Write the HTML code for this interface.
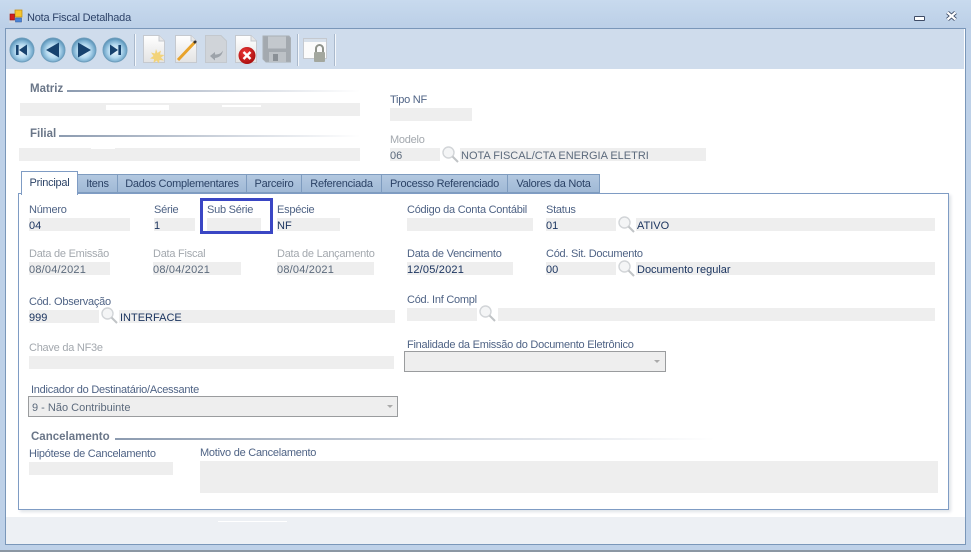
<!DOCTYPE html>
<html><head><meta charset="utf-8"><style>
html,body{margin:0;padding:0}
#w{position:relative;width:971px;height:552px;overflow:hidden;background:#bed1e8;font-family:"Liberation Sans",sans-serif;font-size:11px;letter-spacing:-.25px;color:#4a5f80}
#w *{box-sizing:border-box}
.a{position:absolute}
.f{position:absolute;background:#eee;height:13px}
.l{position:absolute;white-space:nowrap;line-height:14px;color:#4f6385;transform:translateY(1px)}
.g{color:#a3a8ae}
.v{position:absolute;white-space:nowrap;line-height:14px;color:#1c3560;letter-spacing:0;transform:translateY(1px)}
.d{letter-spacing:.2px}
.vg{color:#5c6a7c}
.b{position:absolute;white-space:nowrap;line-height:14px;font-weight:bold;font-size:11.5px;letter-spacing:0;color:#6a7688;transform:translateY(1px)}
.ln{position:absolute;height:2px;background:linear-gradient(90deg,#8c9bb0,#d5dae2 60%,#fff)}
.t{position:absolute;top:174px;height:19px;background:linear-gradient(#b3c8e0,#a0b9d6);border:1px solid #7f9cbf;border-left:0;text-align:center;line-height:19px;color:#2b4266;white-space:nowrap}
.c{position:absolute;background:#eee;border:1px solid #9a9c9e}
.ar{position:absolute;width:0;height:0;border-left:3px solid transparent;border-right:3px solid transparent;border-top:3px solid #aaa}
svg{position:absolute;overflow:visible}
</style></head><body><div id="w">
<div class="a" style="left:0;top:0;width:971px;height:28px;background:linear-gradient(#c8daee,#bbcfe7)"></div>
<div class="a" style="left:0;top:550px;width:971px;height:2px;background:#8b97a3"></div>

<svg style="left:9px;top:9px" width="14" height="14"><rect x="0" y="0" width="14" height="14" fill="#cdd6e2"/><rect x="6" y="1" width="7" height="7" fill="#f7c52c" stroke="#b78a10" stroke-width=".7"/><rect x="1" y="5" width="4.500" height="6" fill="#d21f1f" stroke="#8b1212" stroke-width=".6"/><rect x="6.500" y="9" width="6" height="4" fill="#4c85d6" stroke="#2d5da5" stroke-width=".6"/></svg>
<div class="a" style="left:27px;top:11px;line-height:14px;font-size:11px;letter-spacing:-.2px;color:#2c4268">Nota Fiscal Detalhada</div>
<div class="a" style="left:914px;top:16px;width:11px;height:5px;background:#fff;border:1px solid #3f4c66;border-radius:1px"></div>
<svg style="left:946px;top:11px" width="11" height="10"><path d="M1.500 1.500L9.500 8.500M9.500 1.500L1.500 8.500" stroke="#3f4c66" stroke-width="4"/><path d="M1.500 1.500L9.500 8.500M9.500 1.500L1.500 8.500" stroke="#fff" stroke-width="2.200"/></svg>

<div class="a" style="left:5px;top:28px;width:961px;height:517px;border:1px solid #7a97b9;background:#fff"></div>
<div class="a" style="left:6px;top:29px;width:959px;height:40px;background:#cfdcec"></div>
<div class="a" style="left:6px;top:517px;width:959px;height:27px;background:#edf0f4"></div>
<div class="a" style="left:218px;top:521px;width:69px;height:1px;background:#fff"></div>
<div class="a" style="left:964px;top:29px;width:1px;height:40px;background:#fff"></div>

<svg style="left:0;top:0" width="0" height="0"><defs>
<radialGradient id="ball" cx=".5" cy=".55" r=".55"><stop offset="0" stop-color="#f0f8fd"/><stop offset=".5" stop-color="#b5daf0"/><stop offset=".85" stop-color="#6fa6c9"/><stop offset="1" stop-color="#4f86aa"/></radialGradient>
<linearGradient id="pg" x1="0" y1="0" x2="0" y2="1"><stop offset="0" stop-color="#fff"/><stop offset="1" stop-color="#e3e3e3"/></linearGradient>
<radialGradient id="rd" cx=".4" cy=".35" r=".7"><stop offset="0" stop-color="#f03a3a"/><stop offset="1" stop-color="#a50c0c"/></radialGradient>
</defs></svg>

<svg style="left:9px;top:37px" width="26" height="26"><circle cx="13" cy="13" r="12" fill="url(#ball)" stroke="#6d9dbc"/><path d="M7 8h2.600v10H7zM10 13l8-5.500v11z" fill="#17436f"/></svg>
<svg style="left:40px;top:37px" width="26" height="26"><circle cx="13" cy="13" r="12" fill="url(#ball)" stroke="#6d9dbc"/><path d="M6 13l13-7.500v15z" fill="#17436f"/></svg>
<svg style="left:71px;top:37px" width="26" height="26"><circle cx="13" cy="13" r="12" fill="url(#ball)" stroke="#6d9dbc"/><path d="M20 13L7 5.500v15z" fill="#17436f"/></svg>
<svg style="left:102px;top:37px" width="26" height="26"><circle cx="13" cy="13" r="12" fill="url(#ball)" stroke="#6d9dbc"/><path d="M19 8h-2.600v10H19zM16 13L8 7.500v11z" fill="#17436f"/></svg>
<div class="a" style="left:134px;top:34px;width:2px;height:32px;background:#f4f7fb;border-left:1px solid #aab9cc"></div>

<svg style="left:143px;top:35px" width="22" height="28"><path d="M.5.500H16L21.500 6V27.500H.5z" fill="url(#pg)" stroke="#c5c9cf"/><path d="M16 .5V6h5.500" fill="#e7e7e7" stroke="#c5c9cf"/><path d="M13 14l1.500 4 3.500-2.500-1 4 4.500.5-3.500 2.500 3 3-4.500-.5-.5 3.500-2.500-3-3 2.500.5-4-4-.5 3.500-2.500-2.500-3.500 4 1z" fill="#f2d37a"/></svg>
<svg style="left:175px;top:35px" width="22" height="28"><path d="M.5.500H16L21.500 6V27.500H.5z" fill="url(#pg)" stroke="#c5c9cf"/><path d="M16 .5V6h5.500" fill="#e7e7e7" stroke="#c5c9cf"/><path d="M3 25L20 7" stroke="#e8a32b" stroke-width="3"/><path d="M19 8l2-2" stroke="#333" stroke-width="2.500"/></svg>
<svg style="left:205px;top:35px" width="22" height="28"><path d="M.5.500H16L21.500 6V27.500H.5z" fill="#d0d4d9" stroke="#c3c8ce"/><path d="M5 21l5-4v2.500c4 0 6-1 8-4-1 5-4 7-8 7.500v2.500z" fill="#9da3aa"/></svg>
<svg style="left:235px;top:35px" width="22" height="28"><path d="M.5.500H16L21.500 6V27.500H.5z" fill="url(#pg)" stroke="#c5c9cf"/><path d="M16 .5V6h5.500" fill="#e7e7e7" stroke="#c5c9cf"/></svg>
<svg style="left:238px;top:47px" width="20" height="18"><circle cx="9" cy="8.500" r="8.500" fill="url(#rd)"/><path d="M5.500 5l7 7M12.500 5l-7 7" stroke="#fff" stroke-width="2.400"/></svg>
<svg style="left:262px;top:35px" width="29" height="28"><path d="M1 1H27L28.500 3V27H4L1 24z" fill="#a3a9af" stroke="#a9afb5"/><rect x="6" y="1.500" width="18" height="12" fill="#c3c8cd"/><rect x="7" y="17" width="17" height="10" fill="#bcc1c6"/><rect x="11" y="19" width="5" height="7" fill="#8a9096"/></svg>
<div class="a" style="left:297px;top:34px;width:2px;height:32px;background:#f4f7fb;border-left:1px solid #aab9cc"></div>
<svg style="left:303px;top:38px" width="25" height="25"><rect x=".5" y=".500" width="23" height="20" fill="#fbfbfb" stroke="#c5c9cf"/><rect x="1" y="1" width="22" height="3" fill="#d7e0ea"/><rect x="11" y="14" width="11" height="10" rx="1" fill="#a3a79e"/><path d="M13 14v-3.500a3.500 3.500 0 0 1 7 0V14" fill="none" stroke="#8f938b" stroke-width="2"/></svg>
<div class="a" style="left:334px;top:34px;width:2px;height:32px;background:#f4f7fb;border-left:1px solid #aab9cc"></div>

<div class="b" style="left:30px;top:81px">Matriz</div><div class="ln" style="left:67px;top:90px;width:293px"></div>
<div class="f" style="left:20px;top:103px;width:340px"></div>
<div class="a" style="left:106px;top:105px;width:63px;height:5px;background:#fff"></div>
<div class="a" style="left:222px;top:105px;width:39px;height:2px;background:#fff"></div>
<div class="b" style="left:30px;top:126px">Filial</div><div class="ln" style="left:59px;top:135px;width:301px"></div>
<div class="f" style="left:19px;top:148px;width:341px"></div>
<div class="a" style="left:91px;top:147px;width:24px;height:2px;background:#fff"></div>

<div class="l" style="left:390px;top:92px">Tipo NF</div><div class="f" style="left:390px;top:108px;width:82px"></div>
<div class="l g" style="left:390px;top:132px">Modelo</div><div class="f" style="left:390px;top:148px;width:50px"></div><div class="v vg" style="left:390px;top:148px">06</div>
<svg style="left:442px;top:146px" width="17" height="17"><circle cx="6.500" cy="6.500" r="5.500" fill="#f4f5f6" stroke="#d2d5d8" stroke-width="1.400"/><path d="M10.500 10.500L16 16" stroke="#c0c3c6" stroke-width="2"/></svg>
<div class="f" style="left:460px;top:148px;width:246px"></div><div class="v vg" style="left:461px;top:148px">NOTA FISCAL/CTA ENERGIA ELETRI</div>

<div class="a" style="left:18px;top:193px;width:931px;height:317px;background:#fff;border:1px solid #7f9cc4;box-shadow:2px 2px 3px #dfe3e8"></div>
<div class="t" style="left:78px;width:40px">Itens</div>
<div class="t" style="left:118px;width:129px">Dados Complementares</div>
<div class="t" style="left:247px;width:55px">Parceiro</div>
<div class="t" style="left:302px;width:80px">Referenciada</div>
<div class="t" style="left:382px;width:126px">Processo Referenciado</div>
<div class="t" style="left:508px;width:92px">Valores da Nota</div>
<div class="a" style="left:21px;top:171px;width:57px;height:24px;background:#fff;border:1px solid #7f9cc4;border-bottom:0;text-align:center;line-height:23px;color:#2b4266">Principal</div>

<div class="l" style="left:29px;top:202px">Número</div><div class="f" style="left:29px;top:218px;width:101px"></div><div class="v" style="left:29px;top:218px">04</div>
<div class="l" style="left:154px;top:202px">Série</div><div class="f" style="left:154px;top:218px;width:41px"></div><div class="v" style="left:154px;top:218px">1</div>
<div class="l" style="left:207px;top:202px">Sub Série</div><div class="f" style="left:207px;top:218px;width:54px"></div>
<div class="a" style="left:200px;top:198px;width:73px;height:36px;border:3px solid #3a46c4"></div>
<div class="l" style="left:277px;top:202px">Espécie</div><div class="f" style="left:277px;top:218px;width:63px"></div><div class="v" style="left:277px;top:218px">NF</div>
<div class="l" style="left:407px;top:202px">Código da Conta Contábil</div><div class="f" style="left:407px;top:218px;width:126px"></div>
<div class="l" style="left:546px;top:202px">Status</div><div class="f" style="left:546px;top:218px;width:70px"></div><div class="v" style="left:546px;top:218px">01</div>
<svg style="left:618px;top:216px" width="17" height="17"><circle cx="6.500" cy="6.500" r="5.500" fill="#f4f5f6" stroke="#d2d5d8" stroke-width="1.400"/><path d="M10.500 10.500L16 16" stroke="#c0c3c6" stroke-width="2"/></svg>
<div class="f" style="left:636px;top:218px;width:299px"></div><div class="v" style="left:637px;top:218px">ATIVO</div>

<div class="l g" style="left:29px;top:246px">Data de Emissão</div><div class="f" style="left:29px;top:262px;width:81px"></div><div class="v vg d" style="left:29px;top:262px">08/04/2021</div>
<div class="l g" style="left:153px;top:246px">Data Fiscal</div><div class="f" style="left:153px;top:262px;width:88px"></div><div class="v vg d" style="left:153px;top:262px">08/04/2021</div>
<div class="l g" style="left:277px;top:246px">Data de Lançamento</div><div class="f" style="left:277px;top:262px;width:97px"></div><div class="v vg d" style="left:277px;top:262px">08/04/2021</div>
<div class="l" style="left:407px;top:246px">Data de Vencimento</div><div class="f" style="left:407px;top:262px;width:106px"></div><div class="v d" style="left:407px;top:262px">12/05/2021</div>
<div class="l" style="left:546px;top:246px">Cód. Sit. Documento</div><div class="f" style="left:546px;top:262px;width:70px"></div><div class="v" style="left:546px;top:262px">00</div>
<svg style="left:618px;top:260px" width="17" height="17"><circle cx="6.500" cy="6.500" r="5.500" fill="#f4f5f6" stroke="#d2d5d8" stroke-width="1.400"/><path d="M10.500 10.500L16 16" stroke="#c0c3c6" stroke-width="2"/></svg>
<div class="f" style="left:636px;top:262px;width:299px"></div><div class="v" style="left:637px;top:262px">Documento regular</div>

<div class="l" style="left:29px;top:294px">Cód. Observação</div><div class="f" style="left:29px;top:310px;width:70px"></div><div class="v" style="left:29px;top:310px">999</div>
<svg style="left:101px;top:307px" width="17" height="17"><circle cx="6.500" cy="6.500" r="5.500" fill="#f4f5f6" stroke="#d2d5d8" stroke-width="1.400"/><path d="M10.500 10.500L16 16" stroke="#c0c3c6" stroke-width="2"/></svg>
<div class="f" style="left:119px;top:310px;width:276px"></div><div class="v" style="left:120px;top:310px">INTERFACE</div>
<div class="l" style="left:407px;top:292px">Cód. Inf Compl</div><div class="f" style="left:407px;top:308px;width:70px"></div>
<svg style="left:479px;top:305px" width="17" height="17"><circle cx="6.500" cy="6.500" r="5.500" fill="#f4f5f6" stroke="#d2d5d8" stroke-width="1.400"/><path d="M10.500 10.500L16 16" stroke="#c0c3c6" stroke-width="2"/></svg>
<div class="f" style="left:498px;top:308px;width:437px"></div>

<div class="l g" style="left:29px;top:340px">Chave da NF3e</div><div class="f" style="left:29px;top:356px;width:365px"></div>
<div class="l" style="left:407px;top:337px">Finalidade da Emissão do Documento Eletrônico</div>
<div class="c" style="left:404px;top:351px;width:262px;height:21px"></div><div class="ar" style="left:654px;top:360px"></div>
<div class="l" style="left:31px;top:382px">Indicador do Destinatário/Acessante</div>
<div class="c" style="left:28px;top:396px;width:370px;height:21px"></div><div class="ar" style="left:387px;top:405px"></div>
<div class="v vg" style="left:32px;top:400px">9 - Não Contribuinte</div>

<div class="b" style="left:31px;top:429px">Cancelamento</div><div class="ln" style="left:115px;top:438px;width:600px"></div>
<div class="l" style="left:29px;top:446px">Hipótese de Cancelamento</div><div class="f" style="left:29px;top:462px;width:144px"></div>
<div class="l" style="left:200px;top:445px">Motivo de Cancelamento</div><div class="f" style="left:200px;top:461px;width:738px;height:32px"></div>
</div></body></html>
